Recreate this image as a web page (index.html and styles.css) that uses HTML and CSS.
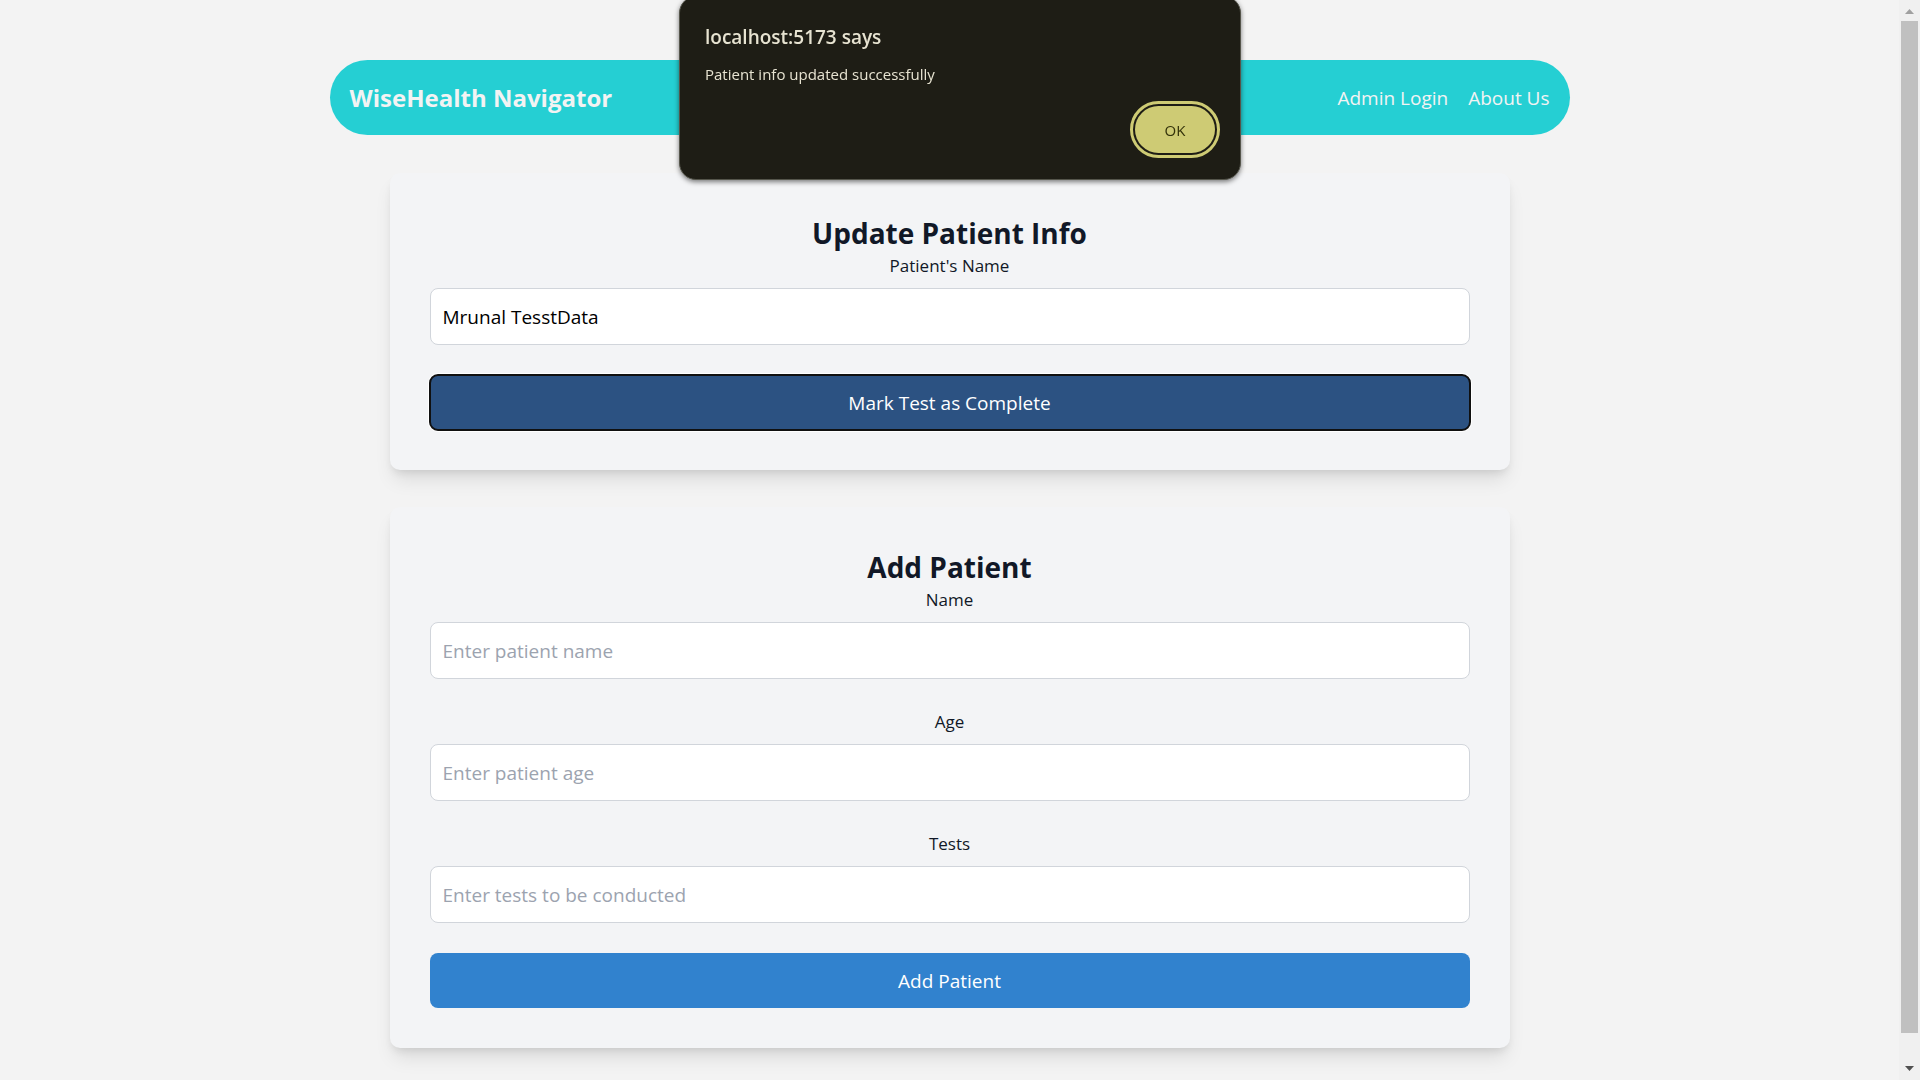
FILE: index.html
```html
<!DOCTYPE html>
<html lang="en">
<head>
  <meta charset="utf-8">
  <meta name="viewport" content="width=device-width, initial-scale=1">
  <title>WiseHealth Navigator</title>
  <link rel="stylesheet" href="styles.css">
</head>
<body>
  <div class="window">
    <div class="page">
      <nav class="navbar">
        <a class="brand" href="#">WiseHealth Navigator</a>
        <div class="nav-links">
          <a href="#">Admin Login</a>
          <a href="#">About Us</a>
        </div>
      </nav>

      <main class="cards">
        <form class="card">
          <h2 class="card-title">Update Patient Info</h2>
          <div class="field">
            <label for="update-name">Patient's Name</label>
            <input id="update-name" type="text" value="Mrunal TesstData">
          </div>
          <button class="btn btn-dark" type="button">Mark Test as Complete</button>
        </form>

        <form class="card">
          <h2 class="card-title">Add Patient</h2>
          <div class="field">
            <label for="name">Name</label>
            <input id="name" type="text" placeholder="Enter patient name">
          </div>
          <div class="field">
            <label for="age">Age</label>
            <input id="age" type="text" placeholder="Enter patient age">
          </div>
          <div class="field">
            <label for="tests">Tests</label>
            <input id="tests" type="text" placeholder="Enter tests to be conducted">
          </div>
          <button class="btn" type="button">Add Patient</button>
        </form>
      </main>
    </div>

    <div class="scrollbar" aria-hidden="true">
      <svg class="arrow arrow-up" viewBox="0 0 9 5"><path d="M0 5 4.500 0 9 5z"/></svg>
      <div class="thumb"></div>
      <svg class="arrow" viewBox="0 0 9 5"><path d="M0 0 4.500 5 9 0z"/></svg>
    </div>
  </div>

  <div class="alert" role="alertdialog" aria-labelledby="alert-title" aria-describedby="alert-text">
    <h1 class="alert-title" id="alert-title">localhost:5173 says</h1>
    <p class="alert-text" id="alert-text">Patient info updated successfully</p>
    <button class="alert-ok" type="button">OK</button>
  </div>
</body>
</html>
```
FILE: styles.css
```css
*,
*::before,
*::after {
  box-sizing: border-box;
}

body {
  margin: 0;
  background: #f3f3f3;
  color: #111827;
  font-family: "Segoe UI", "Open Sans", "Noto Sans", sans-serif;
  font-size: 19px;
}

h1,
h2,
p {
  margin: 0;
}

input,
button {
  font: inherit;
}

.window {
  display: flex;
  height: 100vh;
  overflow: hidden;
}

.page {
  flex: 1;
  padding: 60px 40px;
}

.navbar {
  display: flex;
  align-items: center;
  justify-content: space-between;
  max-width: 1240px;
  height: 75px;
  margin: 0 auto 38px;
  padding: 0 20px;
  border-radius: 38px;
  background: #25cfd3;
}

.navbar a {
  color: #f3f3f3;
  text-decoration: none;
}

.navbar .brand {
  font-size: 24px;
  font-weight: 700;
}

.nav-links {
  display: flex;
  gap: 20px;
}

.cards {
  display: flex;
  flex-direction: column;
  gap: 37px;
  max-width: 1120px;
  margin: 0 auto;
}

.card {
  padding: 40px;
  border-radius: 10px;
  background: #f3f4f6;
  box-shadow: 0 13px 19px -4px rgba(0, 0, 0, 0.1), 0 5px 8px -3px rgba(0, 0, 0, 0.1);
}

.card-title {
  font-size: 28px;
  font-weight: 700;
  line-height: 40px;
  text-align: center;
}

.field {
  display: flex;
  flex-direction: column;
  gap: 10px;
  margin-bottom: 30px;
}

.field label {
  font-size: 17px;
  font-weight: 500;
  line-height: 25px;
  text-align: center;
}

.field input {
  width: 100%;
  height: 57px;
  padding: 0 12px;
  border: 1px solid #d1d5db;
  border-radius: 8px;
  background: #fff;
  color: #000;
}

.field input::placeholder {
  color: #9ca3af;
  opacity: 1;
}

.btn {
  display: block;
  width: 100%;
  height: 55px;
  border: 0;
  border-radius: 8px;
  background: #3182ce;
  color: #fff;
}

.btn-dark {
  outline: 2px solid #101010;
  outline-offset: -1px;
  background: #2c5282;
  box-shadow: 0 0 0 2px #fff;
}

.scrollbar {
  display: flex;
  flex-direction: column;
  align-items: center;
  width: 21px;
  padding: 9px 0;
  gap: 7px;
  background: #f0f0f0;
}

.thumb {
  width: 17px;
  flex: 1;
  margin-bottom: 26px;
  background: #c0c0c0;
}

.arrow {
  width: 9px;
  height: 5px;
  fill: #505050;
}

.arrow-up {
  fill: #a0a0a0;
}

.alert {
  position: fixed;
  top: -4px;
  left: 50%;
  display: flex;
  flex-direction: column;
  width: 562px;
  padding: 26px 25px;
  transform: translateX(-50%);
  border: 1px solid #55554b;
  border-radius: 17px;
  background: #1e1d15;
  box-shadow: 0 2px 5px rgba(0, 0, 0, 0.5);
  color: #e7e3d1;
}

.alert-title {
  font-size: 19px;
  font-weight: 600;
  line-height: 28px;
}

.alert-text {
  margin-top: 11px;
  font-size: 15px;
  line-height: 24px;
}

.alert-ok {
  align-self: flex-end;
  width: 80px;
  height: 47px;
  margin-top: 20px;
  border: 0;
  border-radius: 24px;
  outline: 3px solid #cecb74;
  outline-offset: 2px;
  background: #cecb74;
  color: #33320a;
  font-size: 15px;
  font-weight: 500;
}
```
